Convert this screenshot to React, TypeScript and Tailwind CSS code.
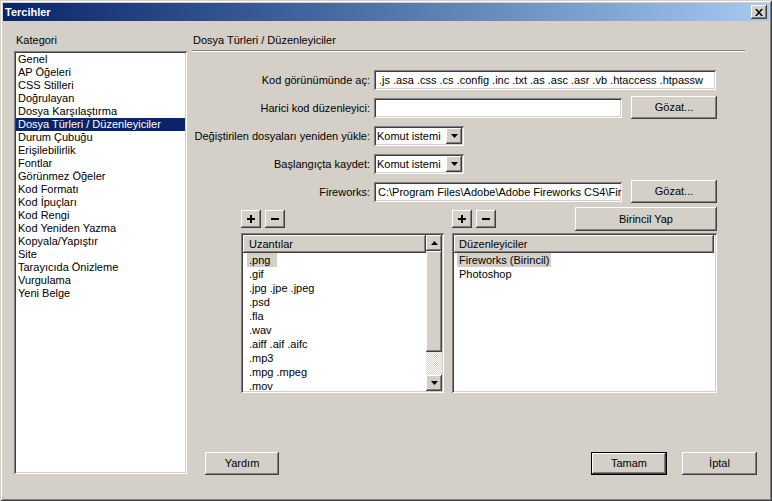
import React from 'react';

const raised =
  'shadow-[inset_-1px_-1px_#404040,inset_1px_1px_#ffffff,inset_-2px_-2px_#808080,inset_2px_2px_#d4d0c8]';
const sunken =
  'shadow-[inset_1px_1px_#808080,inset_-1px_-1px_#ffffff,inset_2px_2px_#404040,inset_-2px_-2px_#d4d0c8]';

const categories = [
  'Genel',
  'AP Öğeleri',
  'CSS Stilleri',
  'Doğrulayan',
  'Dosya Karşılaştırma',
  'Dosya Türleri / Düzenleyiciler',
  'Durum Çubuğu',
  'Erişilebilirlik',
  'Fontlar',
  'Görünmez Öğeler',
  'Kod Formatı',
  'Kod İpuçları',
  'Kod Rengi',
  'Kod Yeniden Yazma',
  'Kopyala/Yapıştır',
  'Site',
  'Tarayıcıda Önizleme',
  'Vurgulama',
  'Yeni Belge',
];

const extensions = [
  '.png',
  '.gif',
  '.jpg .jpe .jpeg',
  '.psd',
  '.fla',
  '.wav',
  '.aiff .aif .aifc',
  '.mp3',
  '.mpg .mpeg',
  '.mov',
];

const Button: React.FC<{ label: string; className?: string; isDefault?: boolean }> = ({
  label,
  className = '',
  isDefault,
}) => (
  <div className={`${className} ${isDefault ? 'border border-black' : ''}`}>
    <div className={`w-full h-full flex items-center justify-center bg-[#d4d0c8] ${raised}`}>
      {label}
    </div>
  </div>
);

const PlusMinus: React.FC = () => (
  <div className="flex gap-[4px]">
    <div className={`w-[20px] h-[18px] flex items-center justify-center bg-[#d4d0c8] ${raised}`}>
      <svg width="8" height="8" viewBox="0 0 8 8">
        <rect x="3" y="0" width="2" height="8" fill="#000" />
        <rect x="0" y="3" width="8" height="2" fill="#000" />
      </svg>
    </div>
    <div className={`w-[20px] h-[18px] flex items-center justify-center bg-[#d4d0c8] ${raised}`}>
      <svg width="8" height="8" viewBox="0 0 8 8">
        <rect x="0" y="3" width="8" height="2" fill="#000" />
      </svg>
    </div>
  </div>
);

const Arrow: React.FC<{ up?: boolean }> = ({ up }) => (
  <svg width="7" height="4" viewBox="0 0 7 4">
    {up ? <polygon points="3.5,0 7,4 0,4" fill="#000" /> : <polygon points="0,0 7,0 3.5,4" fill="#000" />}
  </svg>
);

const Select: React.FC<{ value: string }> = ({ value }) => (
  <div className={`ml-[4px] w-[90px] h-[20px] bg-white p-[2px] flex items-center ${sunken}`}>
    <span className="flex-1 pl-[1px] whitespace-nowrap overflow-hidden">{value}</span>
    <div className={`w-[16px] h-[16px] flex items-center justify-center bg-[#d4d0c8] ${raised}`}>
      <Arrow />
    </div>
  </div>
);

const App: React.FC = () => {
  return (
    <div
      className={`w-[772px] h-[501px] bg-[#d4d0c8] text-black text-[11px] font-['Liberation_Sans',Arial,sans-serif] leading-[13px] shadow-[inset_1px_1px_#d4d0c8,inset_-1px_-1px_#404040,inset_2px_2px_#ffffff,inset_-2px_-2px_#808080] overflow-hidden`}
    >
      {/* Title bar */}
      <div className="mx-[3px] pt-[3px]">
        <div className="h-[18px] bg-linear-to-r from-[#0a246a] to-[#a6caf0] flex items-center justify-between pl-[2px] pr-[2px]">
          <span className="text-white font-bold">Tercihler</span>
          <div className={`w-[16px] h-[14px] flex items-center justify-center bg-[#d4d0c8] ${raised}`}>
            <svg width="8" height="7" viewBox="0 0 8 7">
              <path d="M0 0h2l2 2.5L6 0h2L5 3.5 8 7H6L4 4.5 2 7H0l3-3.5z" fill="#000" />
            </svg>
          </div>
        </div>
      </div>

      <div className="flex pl-[14px] pt-[13px]">
        {/* Kategori */}
        <div className="w-[173px]">
          <div className="pl-[2px] h-[13px]">Kategori</div>
          <div className={`mt-[4px] h-[423px] bg-white p-[2px] ${sunken}`}>
            {categories.map((c) => (
              <div
                key={c}
                className={`h-[13px] pl-[2px] whitespace-nowrap ${
                  c === 'Dosya Türleri / Düzenleyiciler' ? 'bg-[#0a246a] text-white' : ''
                }`}
              >
                {c}
              </div>
            ))}
          </div>
        </div>

        {/* Content */}
        <div className="ml-[5px] w-[565px] flex flex-col">
          <div className="pl-[1px] h-[13px]">Dosya Türleri / Düzenleyiciler</div>
          <div className="mt-[3px] w-[553px] h-[2px] border-t border-b border-t-[#808080] border-b-white" />

          <div className="mt-[18px] flex flex-col gap-[8px]">
            <div className="flex items-center h-[20px]">
              <div className="w-[178px] text-right whitespace-nowrap">Kod görünümünde aç:</div>
              <div className={`ml-[4px] w-[342px] h-[20px] bg-white pl-[5px] pr-[2px] flex items-center overflow-hidden whitespace-nowrap ${sunken}`}>
                .js .asa .css .cs .config .inc .txt .as .asc .asr .vb .htaccess .htpassw
              </div>
            </div>
            <div className="flex items-center h-[20px]">
              <div className="w-[178px] text-right whitespace-nowrap">Harici kod düzenleyici:</div>
              <div className={`ml-[4px] w-[248px] h-[20px] bg-white ${sunken}`} />
              <Button label="Gözat..." className="ml-[9px] w-[86px] h-[23px] shrink-0 -mt-[2px]" />
            </div>
            <div className="flex items-center h-[20px]">
              <div className="w-[178px] text-right whitespace-nowrap">Değiştirilen dosyaları yeniden yükle:</div>
              <Select value="Komut istemi" />
            </div>
            <div className="flex items-center h-[20px]">
              <div className="w-[178px] text-right whitespace-nowrap">Başlangıçta kaydet:</div>
              <Select value="Komut istemi" />
            </div>
            <div className="flex items-center h-[20px]">
              <div className="w-[178px] text-right whitespace-nowrap">Fireworks:</div>
              <div className={`ml-[4px] w-[248px] h-[20px] bg-white pl-[4px] pr-[2px] flex items-center overflow-hidden whitespace-nowrap ${sunken}`}>
                C:\Program Files\Adobe\Adobe Fireworks CS4\Fir
              </div>
              <Button label="Gözat..." className="ml-[9px] w-[86px] h-[23px] shrink-0 -mt-[2px]" />
            </div>
          </div>

          {/* Lists */}
          <div className="mt-[5px] ml-[49px] flex gap-[8px]">
            <div className="w-[203px]">
              <div className="h-[24px] flex items-center">
                <PlusMinus />
              </div>
              <div className={`mt-[2px] h-[160px] bg-white p-[2px] flex ${sunken}`}>
                <div className="w-[183px] overflow-hidden">
                  <div className={`h-[18px] flex items-center pl-[6px] bg-[#d4d0c8] ${raised}`}>Uzantılar</div>
                  {extensions.map((e, i) => (
                    <div key={e} className="h-[14px] leading-[14px] whitespace-nowrap">
                      <span className={`inline-block ml-[4px] pl-[2px] ${i === 0 ? 'w-[30px] bg-[#d4d0c8]' : ''}`}>{e}</span>
                    </div>
                  ))}
                </div>
                <div className="w-[16px] flex flex-col">
                  <div className={`h-[16px] flex items-center justify-center bg-[#d4d0c8] ${raised}`}>
                    <Arrow up />
                  </div>
                  <div className={`h-[101px] bg-[#d4d0c8] ${raised}`} />
                  <div className="h-[23px] bg-[repeating-conic-gradient(#d4d0c8_0_25%,#ffffff_0_50%)] bg-size-[2px_2px]" />
                  <div className={`h-[16px] flex items-center justify-center bg-[#d4d0c8] ${raised}`}>
                    <Arrow />
                  </div>
                </div>
              </div>
            </div>

            <div className="w-[265px]">
              <div className="h-[24px] flex items-center">
                <PlusMinus />
                <Button label="Birincil Yap" className="ml-auto w-[142px] h-[24px]" />
              </div>
              <div className={`mt-[2px] h-[160px] bg-white p-[2px] ${sunken}`}>
                <div className={`h-[18px] mr-[1px] flex items-center pl-[5px] bg-[#d4d0c8] ${raised}`}>Düzenleyiciler</div>
                <div className="h-[14px] leading-[14px] whitespace-nowrap">
                  <span className="inline-block ml-[3px] pl-[2px] w-[94px] bg-[#d4d0c8]">Fireworks (Birincil)</span>
                </div>
                <div className="h-[14px] leading-[14px] whitespace-nowrap">
                  <span className="inline-block ml-[3px] pl-[2px]">Photoshop</span>
                </div>
              </div>
            </div>
          </div>

          {/* Bottom buttons */}
          <div className="mt-[59px] flex items-center">
            <Button label="Yardım" className="ml-[13px] w-[74px] h-[23px]" />
            <div className="flex-1" />
            <Button label="Tamam" className="w-[76px] h-[23px]" isDefault />
            <Button label="İptal" className="ml-[15px] w-[75px] h-[23px]" />
          </div>
        </div>
      </div>
    </div>
  );
};

export default App;
